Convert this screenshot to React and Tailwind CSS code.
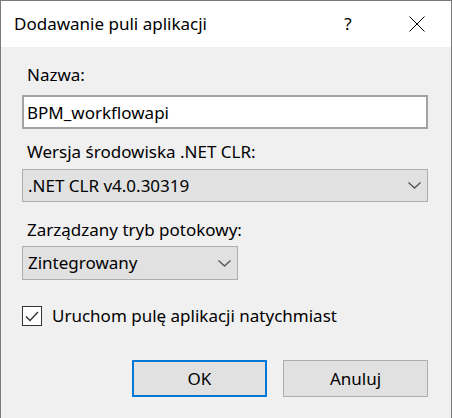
import React, { useState } from 'react';

const font = { fontFamily: '"Noto Sans", "Liberation Sans", sans-serif' };

function Chevron() {
    return (
        <svg width="13" height="7" viewBox="0 0 13 7" fill="none">
            <path d="M0.5 0.5 L6.5 6 L12.5 0.5" stroke="#555555" strokeWidth="1.3" />
        </svg>
    );
}

function Select({ value, className }) {
    return (
        <div className={`flex items-center justify-between bg-[#e1e1e1] border border-[#adadad] pl-[5px] pr-[6px] ${className}`}>
            <span>{value}</span>
            <Chevron />
        </div>
    );
}

export default function App() {
    const [name, setName] = useState('BPM_workflowapi');
    const [start, setStart] = useState(true);

    return (
        <div style={font} className="w-[452px] h-[418px] flex flex-col bg-[#f0f0f0] border-x border-t border-[#7a7a7a] text-[17px] text-black overflow-hidden">
            {/* title bar */}
            <div className="h-[46px] shrink-0 bg-white flex items-center pl-[13px]">
                <span className="flex-1 text-[17px]">Dodawanie puli aplikacji</span>
                <span className="w-[40px] text-center text-[17px] mr-[41px]">?</span>
                <svg width="16" height="16" viewBox="0 0 16 16" className="mr-[26px]">
                    <path d="M0.5 0.5 L15.5 15.5 M15.5 0.5 L0.5 15.5" stroke="#000" strokeWidth="1" />
                </svg>
            </div>

            <div className="flex flex-col pl-[21px] pr-[23px]">
                <label className="mt-[16px] h-[24px] leading-[24px] pl-[5px]">Nazwa:</label>
                <input
                    value={name}
                    onChange={(e) => setName(e.target.value)}
                    className="mt-[8px] h-[34px] bg-white border-2 border-[#a3a3a3] px-[3px] outline-none"
                />

                <label className="mt-[11px] h-[24px] leading-[24px] pl-[5px]">Wersja środowiska .NET CLR:</label>
                <Select value=".NET CLR v4.0.30319" className="mt-[5px] h-[33px]" />

                <label className="mt-[16px] h-[24px] leading-[24px] pl-[5px]">Zarządzany tryb potokowy:</label>
                <Select value="Zintegrowany" className="mt-[4px] h-[34px] w-[216px]" />

                <label className="mt-[26px] flex items-center gap-[10px] h-[20px]" onClick={() => setStart(!start)}>
                    <span className="w-[20px] h-[20px] border border-[#333333] bg-white flex items-center justify-center">
                        {start && (
                            <svg width="14" height="11" viewBox="0 0 14 11" fill="none">
                                <path d="M1 5.5 L5 9.5 L13 1" stroke="#333333" strokeWidth="1.4" />
                            </svg>
                        )}
                    </span>
                    <span>Uruchom pulę aplikacji natychmiast</span>
                </label>

                <div className="mt-[34px] flex justify-end gap-[16px]">
                    <button className="w-[135px] h-[37px] bg-[#e1e1e1] border-2 border-[#0078d7]">OK</button>
                    <button className="w-[145px] h-[37px] bg-[#e1e1e1] border border-[#adadad]">Anuluj</button>
                </div>
            </div>
        </div>
    );
}
